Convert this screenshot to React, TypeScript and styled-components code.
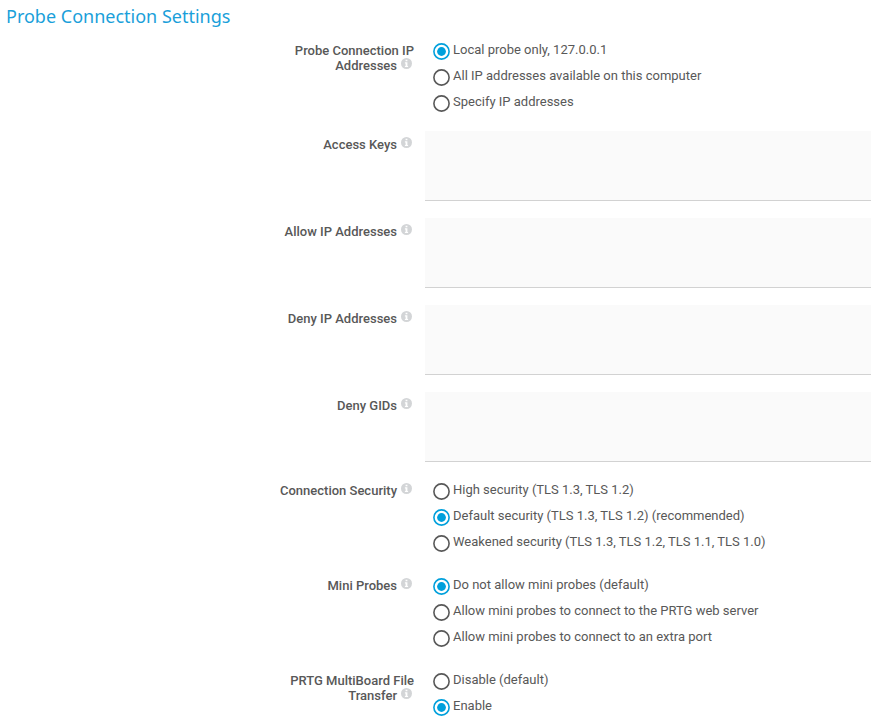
import React, { useId, useState } from "react";
import styled, { createGlobalStyle } from "styled-components";

const GlobalStyle = createGlobalStyle`
  * { box-sizing: border-box; }
  body {
    margin: 0;
    background: #fff;
    color: #585858;
    font: 13px/15px Roboto, sans-serif;
  }
`;

const Form = styled.form`
  overflow: hidden;
`;

const Title = styled.h1`
  margin: 0;
  padding: 4px 6px 7px;
  color: #1a9fda;
  font: 400 18px/25px "Noto Sans", sans-serif;
`;

const Row = styled.div`
  display: grid;
  grid-template-columns: 414px minmax(0, 1fr);
  column-gap: 11px;
`;

const AreaGroup = styled.div`
  display: grid;
  row-gap: 17px;
  padding-bottom: 14px;
`;

const LabelCell = styled.div<{ $area?: boolean }>`
  display: flex;
  justify-content: flex-end;
  padding-top: ${(p) => (p.$area ? 6 : 7)}px;
  text-align: right;
  font-weight: 500;
`;

const LabelText = styled.label`
  max-width: 140px;
`;

const InfoIcon = styled.svg`
  width: 11px;
  height: 11px;
  margin: 0 2px 0 4px;
  vertical-align: 1px;
`;

const Options = styled.div`
  padding: 4px 8px 13px;
`;

const Option = styled.label`
  display: flex;
  align-items: flex-start;
  gap: 3px;
  height: 26px;
  padding-top: 2px;
`;

const RadioBox = styled.span`
  display: grid;
  flex: none;
  width: 17px;
  height: 17px;
  margin-top: 1px;
`;

const Radio = styled.input`
  grid-area: 1 / 1;
  appearance: none;
  width: 17px;
  height: 17px;
  margin: 0;
`;

const RadioMark = styled.svg`
  grid-area: 1 / 1;
  width: 17px;
  height: 17px;
  pointer-events: none;
`;

const TextArea = styled.textarea`
  display: block;
  width: 100%;
  height: 70px;
  padding: 6px 8px;
  border: 0;
  border-bottom: 1px solid #d2d2d2;
  border-radius: 0;
  outline: 0;
  resize: none;
  background: #fafafa;
  color: inherit;
  font: inherit;
`;

function Info() {
  return (
    <InfoIcon viewBox="0 0 11 11" aria-hidden="true">
      <circle cx="5.5" cy="5.5" r="5.5" fill="#d3d5d7" />
      <path d="M4.6 1.7h1.8v1.6H4.6zM3.9 4.2h2.5v3.7h.7v1.2H3.9V7.9h.7V5.4h-.7z" fill="#fff" />
    </InfoIcon>
  );
}

function RadioField({ label, options, initial }: { label: string; options: string[]; initial: number }) {
  const id = useId();
  const [selected, setSelected] = useState(initial);
  return (
    <Row role="radiogroup" aria-labelledby={id}>
      <LabelCell>
        <LabelText as="span" id={id}>{label}<Info /></LabelText>
      </LabelCell>
      <Options>
        {options.map((text, i) => (
          <Option key={text}>
            <RadioBox>
              <Radio type="radio" name={id} checked={selected === i} onChange={() => setSelected(i)} />
              <RadioMark viewBox="0 0 17 17" aria-hidden="true">
                <circle cx="8.5" cy="8.5" r="7.6" fill="#fff" stroke={selected === i ? "#00a0dc" : "#585858"} strokeWidth="1.6" />
                {selected === i && <circle cx="8.5" cy="8.5" r="4.4" fill="#00a0dc" />}
              </RadioMark>
            </RadioBox>
            {text}
          </Option>
        ))}
      </Options>
    </Row>
  );
}

function AreaField({ label }: { label: string }) {
  const id = useId();
  return (
    <Row>
      <LabelCell $area>
        <LabelText htmlFor={id}>{label}<Info /></LabelText>
      </LabelCell>
      <TextArea id={id} />
    </Row>
  );
}

export default function App() {
  return (
    <>
      <GlobalStyle />
      <Form>
        <Title>Probe Connection Settings</Title>
        <RadioField
          label="Probe Connection IP Addresses"
          initial={0}
          options={["Local probe only, 127.0.0.1", "All IP addresses available on this computer", "Specify IP addresses"]}
        />
        <AreaGroup>
          <AreaField label="Access Keys" />
          <AreaField label="Allow IP Addresses" />
          <AreaField label="Deny IP Addresses" />
          <AreaField label="Deny GIDs" />
        </AreaGroup>
        <RadioField
          label="Connection Security"
          initial={1}
          options={["High security (TLS 1.3, TLS 1.2)", "Default security (TLS 1.3, TLS 1.2) (recommended)", "Weakened security (TLS 1.3, TLS 1.2, TLS 1.1, TLS 1.0)"]}
        />
        <RadioField
          label="Mini Probes"
          initial={0}
          options={["Do not allow mini probes (default)", "Allow mini probes to connect to the PRTG web server", "Allow mini probes to connect to an extra port"]}
        />
        <RadioField label="PRTG MultiBoard File Transfer" initial={1} options={["Disable (default)", "Enable"]} />
      </Form>
    </>
  );
}
